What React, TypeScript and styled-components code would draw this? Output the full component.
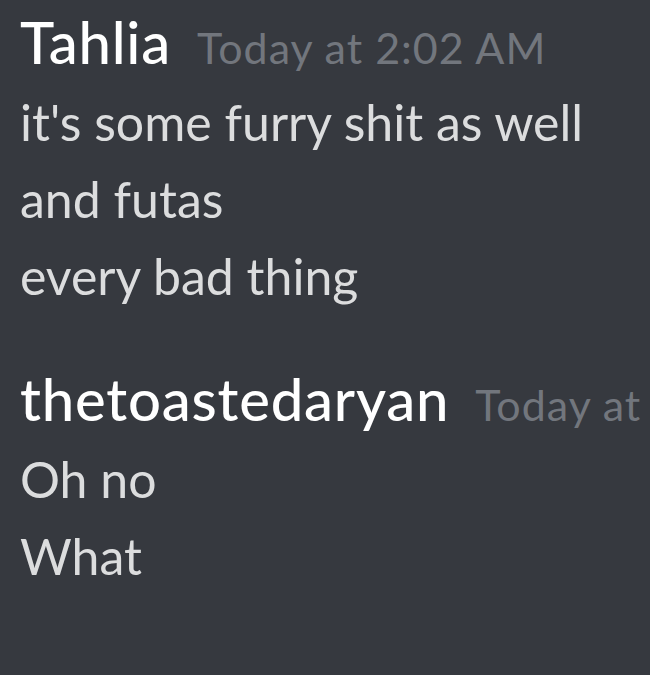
import styled, { createGlobalStyle } from "styled-components";

const GlobalStyle = createGlobalStyle`
  html, body {
    margin: 0;
    padding: 0;
    background: #36393f;
  }
  body {
    font-family: Lato, "Noto Sans", sans-serif;
    -webkit-font-smoothing: antialiased;
  }
`;

const Chat = styled.main`
  width: 650px;
  height: 675px;
  overflow: hidden;
  background: #36393f;
  padding-left: 20px;
  box-sizing: border-box;
  display: flex;
  flex-direction: column;
  gap: 42px;
`;

const Group = styled.section`
  display: flex;
  flex-direction: column;
`;

const Header = styled.div`
  display: flex;
  align-items: baseline;
  gap: 26px;
  height: 84px;
  white-space: nowrap;
`;

const Username = styled.span`
  color: #ffffff;
  font-size: 58px;
  font-weight: 500;
  letter-spacing: 0.8px;
  line-height: 84px;
`;

const Timestamp = styled.span`
  color: #72767d;
  font-size: 43px;
  letter-spacing: 1px;
  line-height: 1;
`;

const Line = styled.div`
  color: #dcddde;
  font-size: 50px;
  line-height: 77px;
  white-space: nowrap;
`;

type Message = { author: string; time: string; lines: string[] };

const messages: Message[] = [
  {
    author: "Tahlia",
    time: "Today at 2:02 AM",
    lines: ["it's some furry shit as well", "and futas", "every bad thing"],
  },
  {
    author: "thetoastedaryan",
    time: "Today at",
    lines: ["Oh no", "What"],
  },
];

export default function App() {
  return (
    <>
      <GlobalStyle />
      <Chat>
        {messages.map((m) => (
          <Group key={m.author}>
            <Header>
              <Username>{m.author}</Username>
              <Timestamp>{m.time}</Timestamp>
            </Header>
            {m.lines.map((line) => (
              <Line key={line}>{line}</Line>
            ))}
          </Group>
        ))}
      </Chat>
    </>
  );
}
